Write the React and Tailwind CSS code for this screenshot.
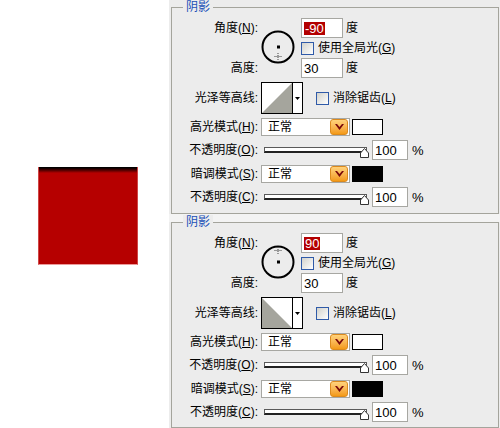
import React from "react";

const ui = "font-['Liberation_Sans','Noto_Sans_CJK_SC',sans-serif]";

const Key = ({ k }) => (
  <>
    (<span className="underline underline-offset-[1px]">{k}</span>):
  </>
);

const Label = ({ children, className = "" }) => (
  <div className={`w-[86px] shrink-0 flex items-center justify-end text-[12px] leading-none text-black ${className}`}>
    {children}
  </div>
);

const Checkbox = ({ text, k }) => (
  <div className="flex items-center">
    <div className="w-[13px] h-[13px] border border-[#2f5aa8] bg-gradient-to-br from-[#d2d2cc] to-white" />
    <span className="ml-[4px] text-[12px] leading-none">
      {text}(<span className="underline underline-offset-[1px]">{k}</span>)
    </span>
  </div>
);

const NumBox = ({ children, w = "w-[42px]" }) => (
  <div className={`${w} h-[20px] border border-[#a7a7a2] bg-white flex items-center pl-[2px] text-[13px] leading-none font-['Liberation_Sans',sans-serif]`}>
    {children}
  </div>
);

const Dial = ({ up }) => (
  <svg width="34" height="34" viewBox="0 0 34 34">
    <circle cx="17" cy="17" r="15.5" fill="none" stroke="#000" strokeWidth="2" />
    <rect x="16" y="15.5" width="3" height="3" fill="#000" />
    <g fill="#444">
      {[-3, -1, 1, 3].map((d) => (
        <rect key={"h" + d} x={17 + d - 0.5} y={(up ? 5.5 : 26.5) - 0.5} width="1" height="1" />
      ))}
      {[-3, -1, 1, 3].map((d) => (
        <rect key={"v" + d} x="16.5" y={(up ? 5.5 : 26.5) + d - 0.5} width="1" height="1" />
      ))}
    </g>
  </svg>
);

const Contour = ({ flip }) => (
  <div className="ml-[3px] w-[42px] h-[32px] border border-black bg-white flex">
    <svg width="30" height="30" viewBox="0 0 30 30" className="shrink-0">
      {flip ? (
        <polygon points="0,0 30,30 0,30" fill="#a5a59d" />
      ) : (
        <polygon points="30,0 30,30 0,30" fill="#a5a59d" />
      )}
    </svg>
    <div className="w-[1px] bg-black" />
    <div className="flex-1 flex items-center justify-center">
      <svg width="5" height="3" viewBox="0 0 5 3">
        <polygon points="0,0 5,0 2.5,3" fill="#000" />
      </svg>
    </div>
  </div>
);

const Select = () => (
  <div className="ml-[3px] w-[89px] h-[18px] border border-[#a7a7a2] bg-white flex items-center justify-between">
    <span className="pl-[6px] text-[12px] leading-none">正常</span>
    <div className="mr-[1px] w-[18px] h-[16px] rounded-[3px] border border-[#dc8a1e] bg-gradient-to-b from-[#ffd27a] to-[#f39a12] flex items-center justify-center">
      <svg width="9" height="6" viewBox="0 0 9 6">
        <polygon points="0,0 2,0 4.5,3 7,0 9,0 4.5,6" fill="#7a0a0a" />
      </svg>
    </div>
  </div>
);

const Slider = () => (
  <div className="relative ml-[3px] w-[108px] h-[20px]">
    <div className="absolute left-[3px] top-[7px] w-[103px] h-[6px] border border-[#5a5a5a] border-b-2 border-b-[#222] bg-white" />
    <svg className="absolute left-[99px] top-[8px]" width="9" height="10" viewBox="0 0 9 10">
      <polygon points="0.5,9.5 0.5,5 4.5,0.5 8.5,5 8.5,9.5" fill="#fff" stroke="#333" strokeWidth="1" />
    </svg>
  </div>
);

const Panel = ({ angle, up, flip, hasStrip }) => (
  <div className={`relative h-full border border-[#a4a49c] ${ui}`}>
    <span className="absolute left-[11px] top-[-8px] px-[3px] bg-[#ececec] text-[#2150b8] text-[12px] leading-[14px]">
      阴影
    </span>
    <div className="pt-[10px]">
      <div className="flex h-[60px]">
        <div className="flex flex-col justify-between">
          <Label className="h-[20px]">
            角度<Key k="N" />
          </Label>
          <Label className="h-[20px]">高度:</Label>
        </div>
        <div className="ml-[3px] pt-[12px]">
          <Dial up={up} />
        </div>
        <div className="ml-[6px] flex flex-col">
          <div className="h-[20px] flex items-center">
            <NumBox>
              <span className="bg-[#b30000] text-white leading-[13px] px-[1px]">{angle}</span>
            </NumBox>
            <span className="ml-[3px] text-[12px] leading-none">度</span>
          </div>
          <div className="h-[20px] flex items-center">
            <Checkbox text="使用全局光" k="G" />
          </div>
          <div className="h-[20px] flex items-center">
            <NumBox>30</NumBox>
            <span className="ml-[3px] text-[12px] leading-none">度</span>
          </div>
        </div>
      </div>

      <div className="mt-[4px] flex h-[32px] items-center">
        <Label className="h-[32px]">光泽等高线:</Label>
        <Contour flip={flip} />
        <div className="ml-[13px]">
          <Checkbox text="消除锯齿" k="L" />
        </div>
      </div>

      <div className="mt-[4px] flex h-[18px] items-center">
        <Label className="h-[18px]">
          高光模式<Key k="H" />
        </Label>
        <Select />
        <div className="ml-[2px] w-[31px] h-[16px] border border-black bg-white" />
      </div>

      <div className="mt-[4px] flex h-[20px] items-center">
        <Label className="h-[20px]">
          不透明度<Key k="O" />
        </Label>
        <Slider />
        <div className="ml-[3px]">
          <NumBox w="w-[36px]">100</NumBox>
        </div>
        <span className="ml-[4px] text-[13px] leading-none">%</span>
      </div>

      <div className="mt-[5px] flex h-[18px] items-center">
        <Label className="h-[18px]">
          暗调模式<Key k="S" />
        </Label>
        <Select />
        <div className="ml-[2px] w-[31px] h-[16px] bg-black" />
      </div>

      <div className="mt-[4px] flex h-[20px] items-center">
        <Label className="h-[20px]">
          不透明度<Key k="C" />
        </Label>
        <Slider />
        <div className="ml-[3px]">
          <NumBox w="w-[36px]">100</NumBox>
        </div>
        <span className="ml-[4px] text-[13px] leading-none">%</span>
      </div>
    </div>
  </div>
);

export default function App() {
  return (
    <div className="flex w-[500px] h-[428px] bg-white overflow-hidden">
      <div className="w-[169px] shrink-0 pl-[38px] pt-[167px]">
        <div className="w-[100px] h-[98px] bg-[#b60000] border-x border-b border-x-[#cf4545] border-b-[#ec9a9a] flex flex-col">
          <div className="h-[6px] bg-gradient-to-b from-black via-[#4a0000] to-[#b60000]" />
        </div>
      </div>
      <div className="flex-1 flex flex-col">
        <div className="h-[214px] bg-[#ececec] pt-[7px] pl-[2px] pr-[1px]">
          <Panel angle="-90" up={false} flip={false} />
        </div>
        <div className="h-[8px] bg-[#f3f3f3]" />
        <div className="h-[206px] bg-[#ececec] pl-[2px] pr-[1px]">
          <Panel angle="90" up={true} flip={true} />
        </div>
      </div>
    </div>
  );
}
